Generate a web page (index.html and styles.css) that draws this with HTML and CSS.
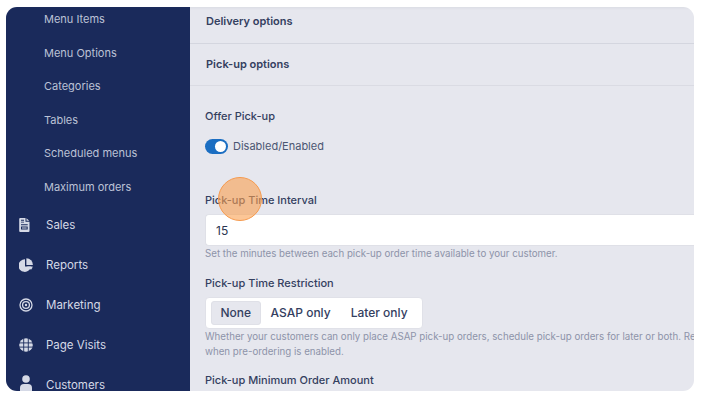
FILE: index.html
```html
<!DOCTYPE html>
<html lang="en">
<head>
<meta charset="utf-8">
<title>Pick-up options</title>
<link rel="stylesheet" href="styles.css">
</head>
<body>
<div class="window">
  <aside class="sidebar">
    <ul class="submenu">
      <li>Menu Items</li>
      <li>Menu Options</li>
      <li>Categories</li>
      <li>Tables</li>
      <li>Scheduled menus</li>
      <li>Maximum orders</li>
    </ul>
    <ul class="menu">
      <li><svg class="icon" viewBox="0 0 14 14" preserveAspectRatio="xMinYMid"><path fill-rule="evenodd" d="M1.200 0H6.500v3.800h4V13a1 1 0 0 1-1 1H1.200a1 1 0 0 1-1-1V1a1 1 0 0 1 1-1zM7.500 .2 10.300 2.800H7.500zM2 6.200v1h6.700v-1zM2 8.600v2.800h6.700V8.600zM3 9.600h4.700v.8H3zM2 1.800v.9h3v-.9zM2 3.700v.9h3v-.9z" fill="#d5d9e6"/></svg>Sales</li>
      <li><svg class="icon" viewBox="0 0 14 14"><path d="M6 1.300A6.300 6.300 0 1 0 12 8.500H6z" fill="#d5d9e6"/><path d="M7.400 .2a6.500 6.500 0 0 1 6.500 6.700H7.400z" fill="#d5d9e6"/><path d="M8 8.400h5.700a6 6 0 0 1-1.700 3.400z" fill="#d5d9e6"/></svg>Reports</li>
      <li><svg class="icon" viewBox="0 0 14 14"><circle cx="7" cy="7" r="6" fill="none" stroke="#d5d9e6" stroke-width="1.300"/><circle cx="7" cy="7" r="3.400" fill="none" stroke="#d5d9e6" stroke-width="1.300"/><circle cx="7" cy="7" r="1.200" fill="#d5d9e6"/></svg>Marketing</li>
      <li><svg class="icon" viewBox="0 0 14 14"><circle cx="7" cy="7" r="6.800" fill="#d5d9e6"/><path d="M4.700 0v14M9.300 0v14M0 4.900h14M0 9.100h14" stroke="#1a2a5b" stroke-width=".9" fill="none"/></svg>Page Visits</li>
      <li><svg class="icon icon-tall" viewBox="0 0 14 18"><circle cx="7" cy="4" r="3.800" fill="#d5d9e6"/><path d="M1 18v-5a4 4 0 0 1 4-4h4a4 4 0 0 1 4 4v5z" fill="#d5d9e6"/></svg>Customers</li>
    </ul>
  </aside>
  <main class="content">
    <div class="section section-first">Delivery options</div>
    <div class="section section-second">Pick-up options</div>
    <form class="form">
      <div class="label label-offer">Offer Pick-up</div>
      <div class="toggle-row">
        <span class="toggle"><span class="knob"></span></span>
        <span>Disabled/Enabled</span>
      </div>
      <div class="label label-interval">Pick-up Time Interval</div>
      <div class="input">15</div>
      <div class="help">Set the minutes between each pick-up order time available to your customer.</div>
      <div class="label label-restriction">Pick-up Time Restriction</div>
      <div class="segmented">
        <span class="seg seg-active">None</span>
        <span class="seg">ASAP only</span>
        <span class="seg">Later only</span>
      </div>
      <div class="help help-wrap">Whether your customers can only place ASAP pick-up orders, schedule pick-up orders for later or both. Restrict<br>when pre-ordering is enabled.</div>
      <div class="label label-minimum">Pick-up Minimum Order Amount</div>
    </form>
    <div class="click-marker"></div>
  </main>
</div>
</body>
</html>
```
FILE: styles.css
```css
* { box-sizing: border-box; }
html, body { margin: 0; height: 100%; background: #fff; }
body {
  padding: 7px 8px 10px 6px;
  font-family: Inter, "Liberation Sans", sans-serif;
  overflow: hidden;
}
.window {
  display: flex;
  height: 384px;
  border-radius: 11px;
  overflow: hidden;
  background: #e6e7ee;
}
.sidebar {
  flex: 0 0 184px;
  background: #1a2a5b;
  color: #bcc2d6;
  overflow: hidden;
}
ul { list-style: none; margin: 0; padding: 0; }
.submenu { margin-top: -4px; padding-left: 38px; font-size: 11px; }
.submenu li { height: 33.6px; line-height: 33.6px; white-space: nowrap; }
.menu { padding-left: 13px; font-size: 11.5px; color: #d5d9e6; }
.menu li { display: flex; align-items: center; gap: 13px; height: 40px; }
.icon { width: 14px; height: 14px; flex: none; }
.icon-tall { height: 18px; margin-top: -2px; }
.content {
  position: relative;
  flex: 1;
  min-width: 0;
  overflow: hidden;
  color: #34405f;
  box-shadow: inset 0 3px 3px -2px rgba(40, 50, 90, .07);
}
.section {
  padding-left: 16px;
  font-size: 11px;
  font-weight: 600;
  border-bottom: 1px solid #d4d6df;
}
.section-first { height: 37px; line-height: 29px; }
.section-second { height: 42px; line-height: 41px; border-bottom-color: #dadbe3; }
.form { padding: 0 0 0 15px; font-size: 11px; }
.label { font-weight: 500; line-height: 14px; }
.label-offer { margin-top: 23px; }
.toggle-row { display: flex; align-items: center; gap: 5px; margin-top: 15px; height: 16px; color: #4b5672; }
.toggle { display: flex; justify-content: flex-end; align-items: center; width: 23px; height: 15px; padding-right: 2px; border-radius: 8px; background: #1b6ec2; }
.knob { width: 11px; height: 11px; border-radius: 50%; background: #fff; }
.label-interval { margin-top: 39px; }
.input {
  margin-top: 7px;
  height: 32px;
  margin-right: -4px;
  padding-left: 10px;
  line-height: 32px;
  font-size: 12px;
  color: #2a3450;
  background: #fff;
  border: 1px solid #dfe0e7;
  border-right: 0;
  border-radius: 4px 0 0 4px;
}
.help { font-size: 9.730px; line-height: 15px; color: #8d93a9; white-space: nowrap; }
.label-restriction { margin-top: 15px; }
.segmented {
  display: flex;
  align-items: center;
  margin-top: 7px;
  width: 218px;
  height: 32px;
  padding: 0 5px;
  background: #fff;
  border: 1px solid #e0e1e8;
  border-radius: 4px;
  font-size: 12px;
  font-weight: 500;
}
.seg { padding: 0 10px; line-height: 24px; white-space: nowrap; }
.seg-active { background: #e6e7ee; border: 1px solid #dfe0e7; border-radius: 3px; line-height: 22px; padding: 0 8.500px; }
.label-minimum { margin-top: 14px; }
.click-marker {
  position: absolute;
  left: 28px;
  top: 170px;
  width: 44px;
  height: 44px;
  border-radius: 50%;
  background: rgba(250, 160, 80, .6);
  border: 1.500px solid #f59a4e;
}
```
